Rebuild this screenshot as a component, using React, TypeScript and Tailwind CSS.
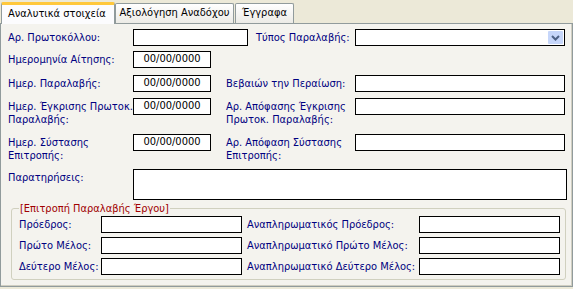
import React from "react";

const Label = ({ children, className = "" }: { children: React.ReactNode; className?: string }) => (
  <div className={`text-[#000080] leading-[13px] ${className}`}>{children}</div>
);

const Box = ({ className = "", children }: { className?: string; children?: React.ReactNode }) => (
  <div className={`h-[17px] border border-black bg-white shrink-0 flex items-center justify-center text-black ${className}`}>
    {children}
  </div>
);

export default function App() {
  return (
    <div
      className="w-[573px] h-[289px] bg-[#ECE9D8] text-[11px] overflow-hidden"
      style={{ fontFamily: '"DejaVu Sans Condensed", "DejaVu Sans", sans-serif' }}
    >
      {/* tabs */}
      <div className="flex items-end h-[23px] pl-[1px] relative z-10">
        <div className="h-[22px] w-[114px] bg-[#FCFCFE] border-x border-[#919B9C] border-t-[3px] border-t-[#FFC83C] rounded-t-[2px] flex items-center pl-[6px] text-black mb-[-1px]">
          Αναλυτικά στοιχεία
        </div>
        <div className="h-[20px] w-[119px] bg-gradient-to-b from-[#FFFFFF] to-[#ECEBE6] border border-b-0 border-[#919B9C] rounded-t-[2px] flex items-center justify-center text-black">
          Αξιολόγηση Αναδόχου
        </div>
        <div className="h-[20px] w-[59px] ml-[1px] bg-gradient-to-b from-[#FFFFFF] to-[#ECEBE6] border border-b-0 border-[#919B9C] rounded-t-[2px] flex items-center justify-center text-black">
          Έγγραφα
        </div>
      </div>
      {/* panel */}
      <div className="h-[264px] w-[573px] border border-[#919B9C] border-r-[#919B9C] bg-[#F4F3EE] shadow-[inset_-1px_-1px_0_#D0CEC1] pl-[7px]">
        {/* row 1 */}
        <div className="flex items-center h-[17px] mt-[5px]">
          <Label className="w-[125px]">Αρ. Πρωτοκόλλου:</Label>
          <Box className="w-[115px]" />
          <Label className="ml-[8px] w-[99px]">Τύπος Παραλαβής:</Label>
          <div className="h-[17px] w-[210px] border border-black bg-white flex items-center justify-end pr-[1px]">
            <div className="h-[13px] w-[15px] bg-[#C6D6FA] rounded-[1px] flex items-center justify-center">
              <svg width="9" height="6" viewBox="0 0 9 6">
                <path d="M1 1 L4.5 4.5 L8 1" fill="none" stroke="#4D6185" strokeWidth="2" />
              </svg>
            </div>
          </div>
        </div>
        {/* row 2 */}
        <div className="flex items-center h-[17px] mt-[5px]">
          <Label className="w-[125px]">Ημερομηνία Αίτησης:</Label>
          <Box className="w-[78px]">00/00/0000</Box>
        </div>
        {/* row 3 */}
        <div className="flex items-center h-[17px] mt-[7px]">
          <Label className="w-[125px]">Ημερ. Παραλαβής:</Label>
          <Box className="w-[78px]">00/00/0000</Box>
          <Label className="ml-[15px] w-[129px]">Βεβαιών την Περαίωση:</Label>
          <Box className="w-[210px]" />
        </div>
        {/* row 4 */}
        <div className="flex items-start h-[30px] mt-[6px]">
          <Label className="w-[125px] pt-[2px]">
            Ημερ. Έγκρισης Πρωτοκ.
            <br />
            Παραλαβής:
          </Label>
          <Box className="w-[78px]">00/00/0000</Box>
          <Label className="ml-[15px] w-[129px] pt-[2px]">
            Αρ. Απόφασης Έγκρισης
            <br />
            Πρωτοκ. Παραλαβής:
          </Label>
          <Box className="w-[210px]" />
        </div>
        {/* row 5 */}
        <div className="flex items-start h-[30px] mt-[6px]">
          <Label className="w-[125px] pt-[2px]">
            Ημερ. Σύστασης
            <br />
            Επιτροπής:
          </Label>
          <Box className="w-[78px]">00/00/0000</Box>
          <Label className="ml-[15px] w-[129px] pt-[2px]">
            Αρ. Απόφαση Σύστασης
            <br />
            Επιτροπής:
          </Label>
          <Box className="w-[210px]" />
        </div>
        {/* row 6 */}
        <div className="flex items-start h-[31px] mt-[5px]">
          <Label className="w-[125px] pt-[2px]">Παρατηρήσεις:</Label>
          <div className="h-[31px] w-[434px] border border-black bg-white" />
        </div>
        {/* group */}
        <div className="relative ml-[3px] mt-[8px] w-[555px] h-[72px] border border-[#D0D0BF] rounded-[3px]">
          <div className="absolute left-[7px] top-[-7px] bg-[#F4F3EE] px-[1px] text-[#A00000] leading-[13px]">
            [Επιτροπή Παραλαβής Έργου]
          </div>
          <div className="pl-[7px] pt-[7px] flex flex-col gap-[4px]">
            <div className="flex items-center h-[17px]">
              <Label className="w-[82px]">Πρόεδρος:</Label>
              <Box className="w-[141px]" />
              <Label className="ml-[5px] w-[172px]">Αναπληρωματικός Πρόεδρος:</Label>
              <Box className="w-[141px]" />
            </div>
            <div className="flex items-center h-[17px]">
              <Label className="w-[82px]">Πρώτο Μέλος:</Label>
              <Box className="w-[141px]" />
              <Label className="ml-[5px] w-[172px]">Αναπληρωματικό Πρώτο Μέλος:</Label>
              <Box className="w-[141px]" />
            </div>
            <div className="flex items-center h-[17px]">
              <Label className="w-[82px]">Δεύτερο Μέλος:</Label>
              <Box className="w-[141px]" />
              <Label className="ml-[5px] w-[172px]">Αναπληρωματικό Δεύτερο Μέλος:</Label>
              <Box className="w-[141px]" />
            </div>
          </div>
        </div>
      </div>
    </div>
  );
}
